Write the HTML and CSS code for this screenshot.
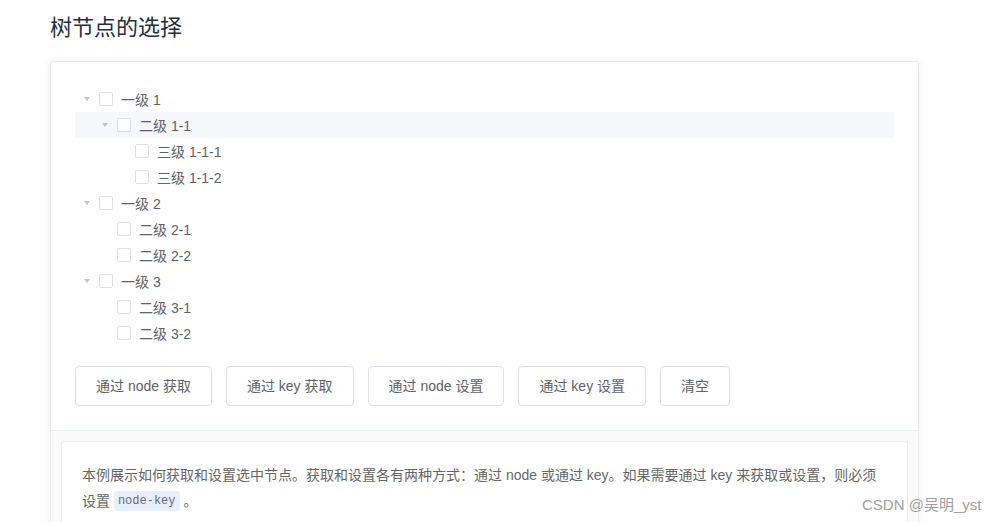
FILE: index.html
```html
<!DOCTYPE html>
<html lang="zh-CN">
<head>
<meta charset="utf-8">
<title>树节点的选择</title>
<link rel="stylesheet" href="styles.css">
</head>
<body>
<div class="page">
  <h3 class="title">树节点的选择</h3>
  <div class="demo-block">
    <div class="source">
      <div class="tree">
        <div class="node"><span class="caret"></span><span class="checkbox"></span><span class="label">一级 1</span></div>
        <div class="node hover lv2"><span class="caret"></span><span class="checkbox"></span><span class="label">二级 1-1</span></div>
        <div class="node lv3"><span class="caret leaf"></span><span class="checkbox"></span><span class="label">三级 1-1-1</span></div>
        <div class="node lv3"><span class="caret leaf"></span><span class="checkbox"></span><span class="label">三级 1-1-2</span></div>
        <div class="node"><span class="caret"></span><span class="checkbox"></span><span class="label">一级 2</span></div>
        <div class="node lv2"><span class="caret leaf"></span><span class="checkbox"></span><span class="label">二级 2-1</span></div>
        <div class="node lv2"><span class="caret leaf"></span><span class="checkbox"></span><span class="label">二级 2-2</span></div>
        <div class="node"><span class="caret"></span><span class="checkbox"></span><span class="label">一级 3</span></div>
        <div class="node lv2"><span class="caret leaf"></span><span class="checkbox"></span><span class="label">二级 3-1</span></div>
        <div class="node lv2"><span class="caret leaf"></span><span class="checkbox"></span><span class="label">二级 3-2</span></div>
      </div>
      <div class="buttons">
        <button class="btn">通过 node 获取</button>
        <button class="btn">通过 key 获取</button>
        <button class="btn">通过 node 设置</button>
        <button class="btn">通过 key 设置</button>
        <button class="btn">清空</button>
      </div>
    </div>
    <div class="meta">
      <div class="description">
        <p>本例展示如何获取和设置选中节点。获取和设置各有两种方式：通过 node 或通过 key。如果需要通过 key 来获取或设置，则必须设置 <code>node-key</code>。</p>
      </div>
    </div>
  </div>
</div>
<div class="watermark">CSDN @吴明_yst</div>
</body>
</html>
```

FILE: styles.css
```css
html, body {
  margin: 0;
  padding: 0;
  background: #fff;
  overflow: hidden;
  height: 522px;
}
body {
  font-family: "Liberation Sans", "Noto Sans CJK SC", sans-serif;
  color: #606266;
}
.page {
  padding-left: 50px;
  width: 869px;
}
.title {
  margin: 13px 0 18px;
  font-size: 22px;
  line-height: 30px;
  font-weight: 400;
  color: #1f2f3d;
}
.demo-block {
  border: 1px solid #ebebeb;
  border-radius: 3px;
  box-shadow: 0 0 8px 0 rgba(232, 237, 250, .6), 0 2px 4px 0 rgba(232, 237, 250, .5);
  background: #fff;
}
.source {
  padding: 24px;
}
.tree {
  display: flex;
  flex-direction: column;
}
.node {
  display: flex;
  align-items: center;
  height: 26px;
  font-size: 14px;
  color: #606266;
}
.node.lv2 { padding-left: 18px; }
.node.lv3 { padding-left: 36px; }
.node.hover { background: #f5f7fa; }
.caret {
  width: 24px;
  height: 26px;
  display: flex;
  align-items: center;
  justify-content: center;
}
.caret::before {
  content: "";
  width: 0;
  height: 0;
  border-left: 3.5px solid transparent;
  border-right: 3.5px solid transparent;
  border-top: 4.5px solid #c0c4cc;
}
.caret.leaf::before { border-top-color: transparent; }
.checkbox {
  box-sizing: border-box;
  width: 14px;
  height: 14px;
  border: 1px solid #dcdfe6;
  border-radius: 2px;
  background: #fff;
  margin-right: 8px;
}
.label {
  line-height: 26px;
  padding-top: 2px;
}
.buttons {
  display: flex;
  gap: 14px;
  margin-top: 20px;
}
.btn {
  font-family: inherit;
  font-size: 14px;
  line-height: 14px;
  color: #606266;
  background: #fff;
  border: 1px solid #dcdfe6;
  border-radius: 4px;
  padding: 12px 20px;
  height: 40px;
  white-space: nowrap;
}
.meta {
  border-top: 1px solid #eaeefb;
  background: #fafafa;
  padding: 10px;
  height: 120px;
}
.description {
  border: 1px solid #ebebeb;
  border-radius: 3px;
  background: #fff;
  padding: 20px;
}
.description p {
  margin: 0;
  font-size: 14px;
  line-height: 26px;
  color: #666;
}
.description code {
  font-family: "Liberation Mono", "DejaVu Sans Mono", monospace;
  color: #5e6d82;
  background-color: #e6effb;
  margin: 0 4px 0 0;
  display: inline-block;
  padding: 0 4px;
  font-size: 12px;
  line-height: 20px;
  border-radius: 3px;
  vertical-align: top;
  margin-top: 3px;
}
.watermark {
  position: absolute;
  left: 862px;
  top: 495px;
  font-size: 15px;
  line-height: 20px;
  color: #a0a0a0;
  font-family: "Liberation Sans", "Noto Sans CJK SC", sans-serif;
  text-shadow: 0 0 2px #fff;
}
```
